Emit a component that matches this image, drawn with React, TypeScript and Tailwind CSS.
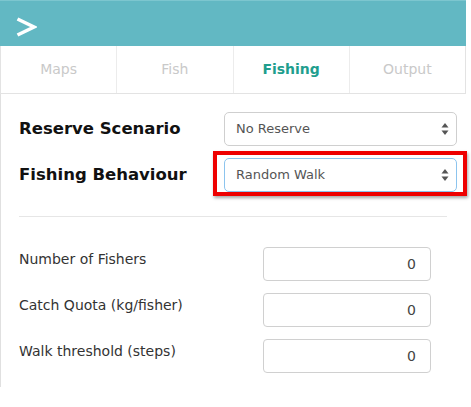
const tabs = [
  { label: 'Maps', active: false },
  { label: 'Fish', active: false },
  { label: 'Fishing', active: true },
  { label: 'Output', active: false },
];

const numberFields = ['Number of Fishers', 'Catch Quota (kg/fisher)', 'Walk threshold (steps)'];

const SelectArrows = () => (
  <svg width="8" height="14" viewBox="0 0 8 14" className="shrink-0">
    <path d="M4 1 L7.5 5.5 L0.5 5.5 Z" fill="#555" />
    <path d="M4 13 L7.5 8.5 L0.5 8.5 Z" fill="#555" />
  </svg>
);

const FakeSelect = ({ value, focused }: { value: string; focused?: boolean }) => (
  <div
    className={`w-[233px] h-[34px] rounded-[5px] border bg-white flex items-center justify-between pl-[11px] pr-[7px] text-[13px] text-[#555] ${
      focused ? 'border-[#8cc4ee]' : 'border-[#cfcfcf]'
    }`}
  >
    <span>{value}</span>
    <SelectArrows />
  </div>
);

export default function App() {
  return (
    <div className="w-[471px] h-[407px] bg-white overflow-hidden font-['DejaVu_Sans',sans-serif]">
      <header className="w-[466px] h-[46px] bg-[#62b8c3] border-t border-[#7cc6cf] flex items-center pl-[15px] pt-[6px]">
        <svg width="22" height="22" viewBox="0 0 22 22">
          <polyline points="2.5,3 19,11 2.5,19" fill="none" stroke="white" strokeWidth="3.6" strokeLinejoin="miter" />
        </svg>
      </header>

      <nav className="w-[466px] h-[48px] flex border border-t-0 border-[#e3e3e3]">
        {tabs.map((tab, i) => (
          <div
            key={tab.label}
            className={`flex-1 flex items-center justify-center text-[14px] ${
              i < tabs.length - 1 ? 'border-r border-[#ececec]' : ''
            } ${tab.active ? 'font-bold text-[#1f9e8e]' : 'text-[#c9c9c9]'}`}
          >
            {tab.label}
          </div>
        ))}
      </nav>

      <section className="h-[293px] border-l border-[#e0e0e0] pl-[18px] pr-[14px] pt-[18px]">
        <div className="flex items-center justify-between">
          <span className="text-[16.5px] font-bold text-[#111]">Reserve Scenario</span>
          <FakeSelect value="No Reserve" />
        </div>

        <div className="flex items-center justify-between mt-[12px]">
          <span className="text-[16.5px] font-bold text-[#111]">Fishing Behaviour</span>
          <div className="relative">
            <FakeSelect value="Random Walk" focused />
            <div className="absolute left-[-11px] right-[-10px] top-[-7px] bottom-[-4px] border-4 border-[#ee0000] shadow-[1px_2px_3px_rgba(0,0,0,0.35)]" />
          </div>
        </div>

        <div className="h-px bg-[#e6e6e6] mt-[24px] mr-[10px]" />

        <div className="flex flex-col gap-[12px] mt-[30px] pr-[26px]">
          {numberFields.map(label => (
            <div key={label} className="flex items-start justify-between">
              <span className="text-[14px] text-[#333] pt-[2px]">{label}</span>
              <div className="w-[168px] h-[34px] rounded-[4px] border border-[#d0d0d0] flex items-center justify-end pr-[14px] text-[14px] text-[#444]">
                0
              </div>
            </div>
          ))}
        </div>
      </section>
    </div>
  );
}
